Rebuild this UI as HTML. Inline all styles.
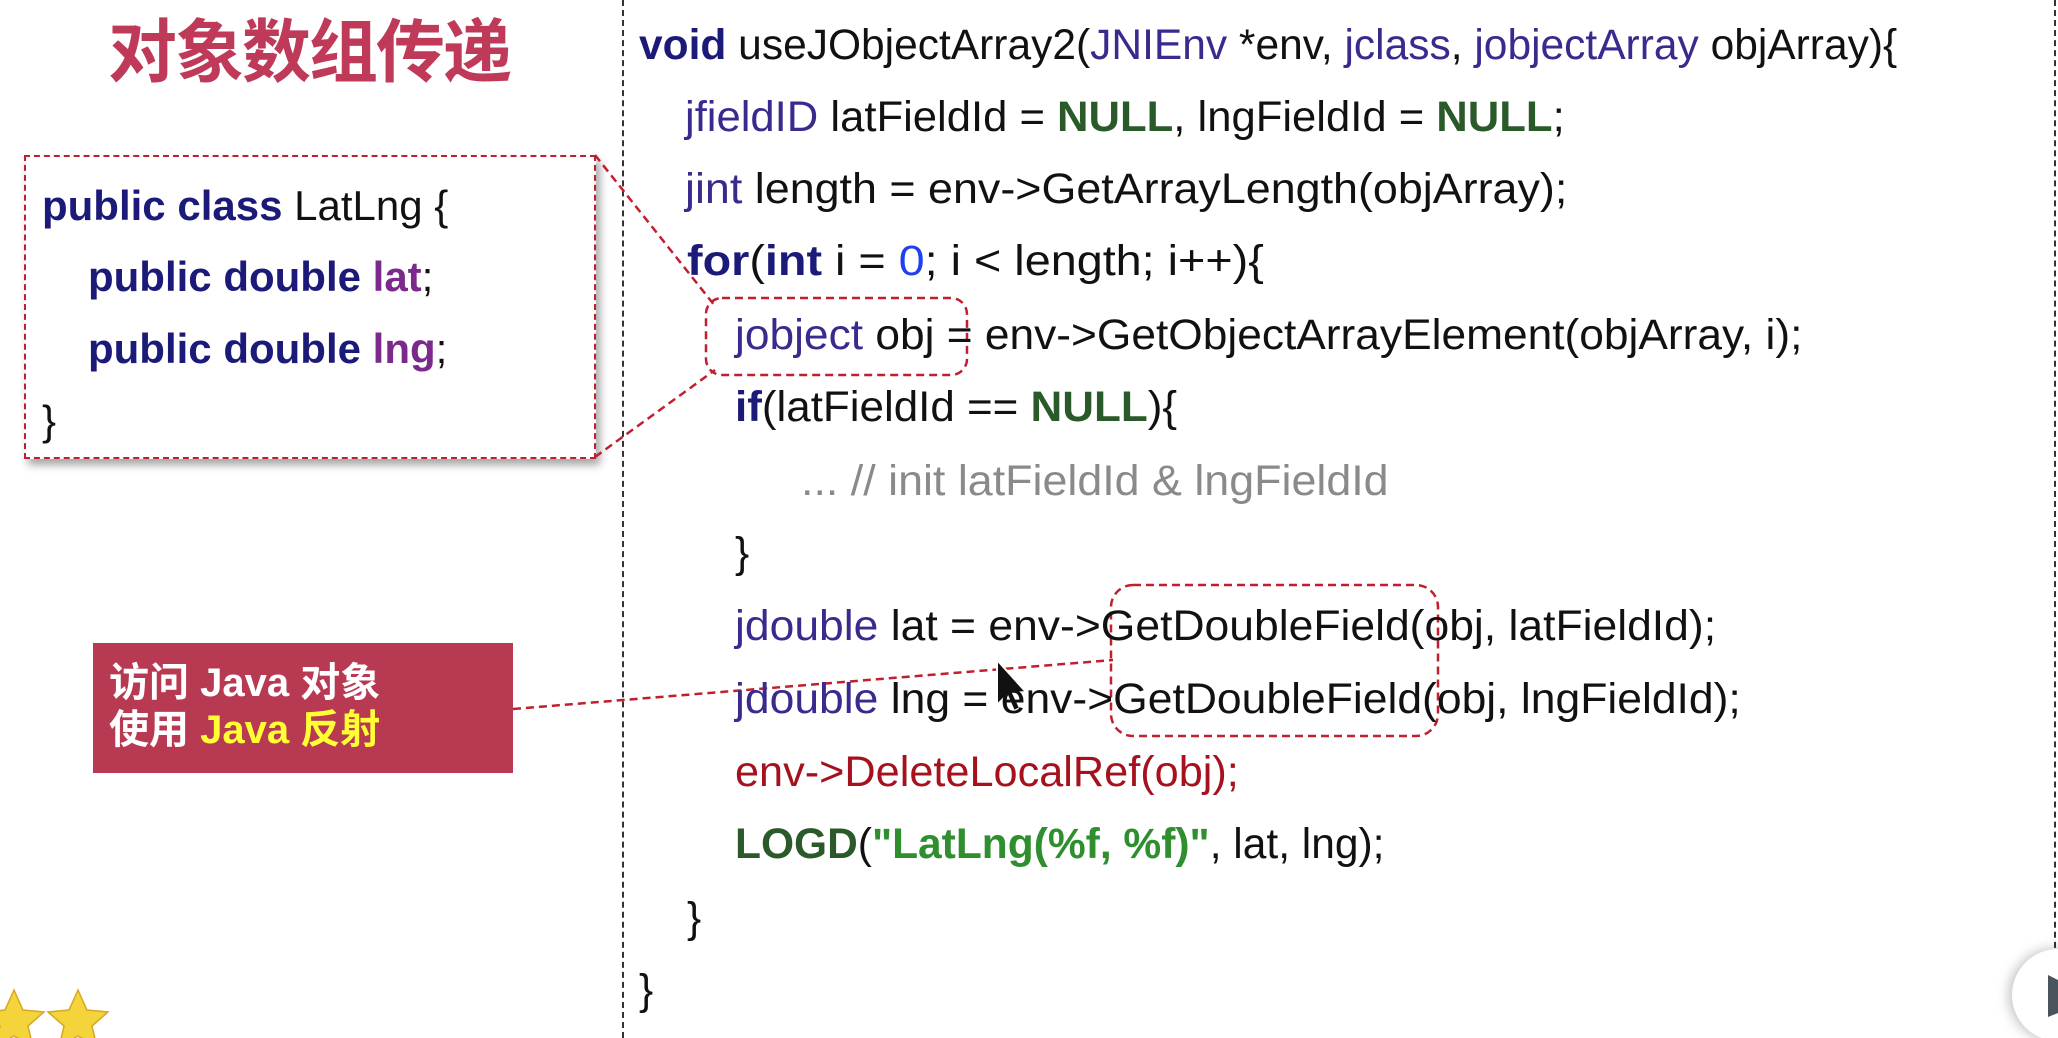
<!DOCTYPE html>
<html><head><meta charset="utf-8"><style>
html,body{margin:0;padding:0;background:#fff;}
body{width:2058px;height:1038px;position:relative;overflow:hidden;font-family:"Liberation Sans","Noto Sans CJK SC",sans-serif;}
.l{position:absolute;white-space:pre;font-size:42.5px;line-height:52px;color:#111;transform-origin:0 50%;}
.k{color:#1c1a78;font-weight:bold}
.t{color:#3a2a8e}
.n{color:#2a5a2a;font-weight:bold}
.z{color:#2040f0}
.r{color:#a5121d}
.s{color:#2f8f2f;font-weight:bold}
.c{color:#8a8a8a}
.p{color:#7a2a8a;font-weight:bold}
</style></head><body>
<div style="position:absolute;left:108px;top:4px;font-size:69px;font-weight:bold;color:#bf3a58;font-family:'Noto Sans CJK SC',sans-serif;line-height:84px;letter-spacing:-2px">对象数组传递</div>
<div style="position:absolute;left:622px;top:0;height:1038px;border-left:2px dashed #333"></div>
<div style="position:absolute;left:2054px;top:0;height:1038px;border-left:2px dashed #333"></div>

<div style="position:absolute;left:24px;top:155px;width:568px;height:300px;border:2px dashed #c0202e;box-shadow:4px 6px 8px rgba(0,0,0,0.35);background:#fff"></div>
<div class="l" style="left:42px;top:180px;font-size:42px"><span class="k">public class</span> LatLng {</div>
<div class="l" style="left:88px;top:251px;font-size:42px"><span class="k">public double</span> <span class="p">lat</span>;</div>
<div class="l" style="left:88px;top:323px;font-size:42px"><span class="k">public double</span> <span class="p">lng</span>;</div>
<div class="l" style="left:42px;top:395px;font-size:42px">}</div>

<div style="position:absolute;left:93px;top:643px;width:420px;height:130px;background:#b83a52"></div>
<div style="position:absolute;left:109px;top:660px;font-size:40px;line-height:47px;color:#fff;font-weight:bold;font-family:'Liberation Sans','Noto Sans CJK SC',sans-serif">访问 Java 对象<br>使用 <span style="color:#ffff33">Java 反射</span></div>

<svg width="2058" height="1038" style="position:absolute;left:0;top:0" fill="none">
<g stroke="#c0202e" stroke-width="2.5" stroke-dasharray="8,5">
<line x1="595" y1="155" x2="715" y2="306"/>
<line x1="595" y1="457" x2="715" y2="370"/>
<line x1="513" y1="709" x2="1113" y2="660"/>
<rect x="706" y="298" width="261" height="77" rx="16"/>
<rect x="1111" y="585" width="327" height="151" rx="22"/>
</g>
<path d="M997 660 L997 705 L1007 695 L1014 711 L1020 708 L1013 693 L1026 692 Z" fill="#111" stroke="#fff" stroke-width="2"/>
<g fill="#f5d33a" stroke="#d8a820" stroke-width="1.5">
<path d="M78 990 L87 1010 L108 1012 L92 1026 L97 1047 L78 1036 L59 1047 L64 1026 L48 1012 L69 1010 Z"/>
<path d="M14 990 L23 1010 L44 1012 L28 1026 L33 1047 L14 1036 L-5 1047 L0 1026 L-16 1012 L5 1010 Z"/>
</g>
<circle cx="2058" cy="995" r="46" fill="#fff" style="filter:drop-shadow(-3px 0 6px rgba(0,0,0,0.25))"/>
<path d="M2048 975 L2058 980 L2058 1013 L2048 1017 Z" fill="#4a545c"/>
</svg>

<div class="l" style="left:639px;top:20px"><span class="k">void</span> useJObjectArray2(<span class="t">JNIEnv</span> *env, <span class="t">jclass</span>, <span class="t">jobjectArray</span> objArray){</div>
<div class="l" style="left:685px;top:92px;transform:scaleX(1.026)"><span class="t">jfieldID</span> latFieldId = <span class="n">NULL</span>, lngFieldId = <span class="n">NULL</span>;</div>
<div class="l" style="left:685px;top:164px;transform:scaleX(1.055)"><span class="t">jint</span> length = env-&gt;GetArrayLength(objArray);</div>
<div class="l" style="left:687px;top:236px;transform:scaleX(1.10)"><span class="k">for</span>(<span class="k">int</span> i = <span class="z">0</span>; i &lt; length; i++){</div>
<div class="l" style="left:735px;top:310px;transform:scaleX(1.042)"><span class="t">jobject</span> obj = env-&gt;GetObjectArrayElement(objArray, i);</div>
<div class="l" style="left:735px;top:382px;transform:scaleX(1.034)"><span class="k">if</span>(latFieldId == <span class="n">NULL</span>){</div>
<div class="l c" style="left:801px;top:456px;transform:scaleX(1.054)">... // init latFieldId &amp; lngFieldId</div>
<div class="l" style="left:735px;top:528px">}</div>
<div class="l" style="left:735px;top:601px;transform:scaleX(1.046)"><span class="t">jdouble</span> lat = env-&gt;GetDoubleField(obj, latFieldId);</div>
<div class="l" style="left:735px;top:674px;transform:scaleX(1.046)"><span class="t">jdouble</span> lng = env-&gt;GetDoubleField(obj, lngFieldId);</div>
<div class="l r" style="left:735px;top:747px;transform:scaleX(1.018)">env-&gt;DeleteLocalRef(obj);</div>
<div class="l" style="left:735px;top:819px"><span class="n">LOGD</span>(<span class="s">"LatLng(%f, %f)"</span>, lat, lng);</div>
<div class="l" style="left:687px;top:893px">}</div>
<div class="l" style="left:639px;top:965px">}</div>
</body></html>
